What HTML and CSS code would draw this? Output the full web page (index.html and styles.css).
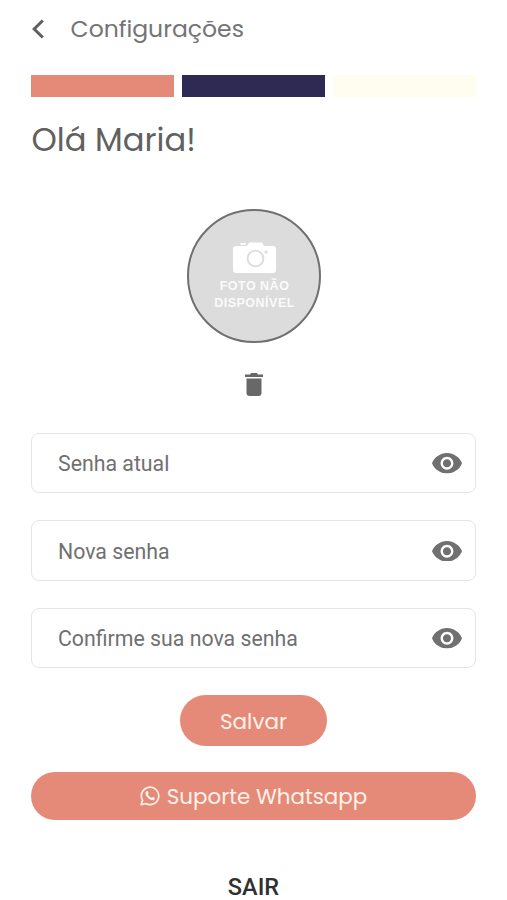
FILE: index.html
```html
<!DOCTYPE html>
<html lang="pt-BR">
<head>
<meta charset="utf-8">
<title>Configurações</title>
<link rel="stylesheet" href="styles.css">
</head>
<body>
<svg width="0" height="0" class="defs">
  <symbol id="eye" viewBox="1 4.5 22 15" preserveAspectRatio="none"><path d="M12 4.500C7 4.500 2.730 7.610 1 12c1.730 4.390 6 7.500 11 7.500s9.270-3.110 11-7.500c-1.730-4.390-6-7.500-11-7.500zM12 16.700c-2.600 0-4.700-2.100-4.700-4.700s2.100-4.700 4.700-4.700 4.700 2.100 4.700 4.700-2.100 4.700-4.700 4.700zm0-7.700c-1.660 0-3 1.340-3 3s1.340 3 3 3 3-1.340 3-3-1.340-3-3-3z"/></symbol>
</svg>
<main class="screen">
  <header class="header">
    <svg class="back" viewBox="0 0 13 20"><path d="M11.800 1.500 3.200 10l8.600 8.500"/></svg>
    <h1 class="title">Configurações</h1>
  </header>
  <div class="bars"><i class="bar coral"></i><i class="bar navy"></i><i class="bar cream"></i></div>
  <h2 class="greeting">Olá Maria!</h2>
  <div class="avatar">
    <svg class="camera" viewBox="0 0 43 32">
      <path fill="#fff" d="M3 4h11l2-3.500h13L31 4h9a3 3 0 0 1 3 3v21a3 3 0 0 1-3 3H3a3 3 0 0 1-3-3V7a3 3 0 0 1 3-3z"/>
      <path fill="#fff" d="M7.500 1h5.500v1.800H7.500z"/>
      <circle cx="22.500" cy="16.500" r="7.900" fill="none" stroke="#dcdcdc" stroke-width="1.900"/>
      <circle cx="33" cy="10" r="1.600" fill="#dcdcdc"/>
    </svg>
    <div class="no-photo">FOTO NÃO<br>DISPONÍVEL</div>
  </div>
  <svg class="trash" viewBox="0 0 18 23"><path d="M1.500 5.500h15V20a3 3 0 0 1-3 3h-9a3 3 0 0 1-3-3zM0 1.500h5L6.200 0h5.600L13 1.500h5V4H0z"/></svg>
  <form class="fields">
    <div class="field"><span class="label">Senha atual</span><svg class="eye"><use href="#eye"/></svg></div>
    <div class="field"><span class="label">Nova senha</span><svg class="eye"><use href="#eye"/></svg></div>
    <div class="field"><span class="label">Confirme sua nova senha</span><svg class="eye"><use href="#eye"/></svg></div>
  </form>
  <button class="btn save">Salvar</button>
  <button class="btn support">
    <svg class="whatsapp" viewBox="0 0 20 20"><path class="ring" d="M1.200 18.800 2.500 14.200A8.700 8.700 0 1 1 5.800 17.500z"/><path class="phone" d="M6.500 5.200c.4-.4 1.200-.3 1.400.2l.7 1.700c.1.400-.8 1.200-.7 1.500.8 1.500 1.900 2.500 3.400 3.200.4.200 1.200-1.100 1.600-.9l1.700.8c.7.400 0 1.900-.7 2.300-2.900 1.400-8.800-3.400-8.500-6.900.1-.8.600-1.500 1.100-1.900z"/></svg>
    <span>Suporte Whatsapp</span>
  </button>
  <button class="logout">SAIR</button>
</main>
</body>
</html>
```
FILE: styles.css
```css
* { box-sizing: border-box; }
body { margin: 0; background: #fff; font-family: Poppins, Inter, sans-serif; color: #5f5f5f; }
.defs { display: none; }
.screen { height: 900px; padding: 0 31px; display: flex; flex-direction: column; align-items: center; }
h1, h2 { margin: 0; font-weight: 400; }
.header { width: 100%; height: 58px; flex: none; display: flex; align-items: center; }
.back { width: 13px; height: 20px; margin-right: 26.500px; fill: none; stroke: #5f5f5f; stroke-width: 3; }
.title { font-size: 23.500px; line-height: 30px; color: #747474; white-space: nowrap; }
.bars { width: 100%; flex: none; margin-top: 17px; display: grid; grid-template-columns: repeat(3, 1fr); gap: 8px; height: 21.500px; }
.coral { background: #e58a78; }
.navy { background: #2e2a53; }
.cream { background: #fffdef; }
.greeting { align-self: flex-start; flex: none; margin: 23px 0 0 0.500px; height: 40px; line-height: 40px; font-size: 32.200px; color: #606060; white-space: nowrap; }
.avatar { width: 134px; height: 134px; flex: none; margin-top: 49.500px; border: 2px solid #707070; border-radius: 50%; background: #dcdcdc; display: flex; flex-direction: column; align-items: center; padding: 30.500px 0 0 2px; }
.camera { width: 43px; height: 32px; flex: none; }
.no-photo { margin-top: 4.500px; color: #fafafa; font: bold 12.500px/17px "Liberation Sans", Arial, sans-serif; letter-spacing: 0.500px; text-align: center; white-space: nowrap; }
.trash { width: 18px; height: 23px; flex: none; margin-top: 30px; fill: #686868; }
.fields { width: 100%; flex: none; margin: 36.500px 0 0; display: flex; flex-direction: column; gap: 27px; }
.field { height: 60.500px; border: 1.500px solid #e5e5e5; border-radius: 8px; padding: 1px 13px 0 26px; display: flex; align-items: center; justify-content: space-between; }
.label { font: 21.300px/28px Roboto, sans-serif; padding-top: 1.500px; color: #707070; white-space: nowrap; }
.eye { width: 30px; height: 20.500px; fill: #707070; }
.btn { border: 0; padding: 0; background: #e58a78; color: #fff2e9; font-family: inherit; display: flex; align-items: center; justify-content: center; white-space: nowrap; flex: none; }
.save { width: 147px; height: 51px; margin-top: 27px; border-radius: 26px; padding-top: 1px; font-size: 21.500px; }
.support { width: 100%; height: 48px; margin-top: 26px; border-radius: 24px; font-size: 21.400px; gap: 7px; }
.whatsapp { width: 20px; height: 20px; }
.ring { fill: none; stroke: #fff2e9; stroke-width: 1.700; stroke-linejoin: round; }
.phone { fill: #fff2e9; }
.logout { margin-top: 57px; flex: none; border: 0; padding: 0; background: none; color: #303030; font: 500 23.500px/21px Roboto, sans-serif; }
```
